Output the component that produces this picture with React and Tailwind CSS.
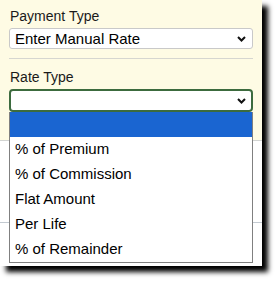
const font = { fontFamily: '"Liberation Sans", Arial, sans-serif' };

function Chevron() {
  return (
    <svg width="9" height="6" viewBox="0 0 9 6" className="shrink-0">
      <path d="M1 1 L4.5 4.5 L8 1" fill="none" stroke="#111" strokeWidth="2" />
    </svg>
  );
}

const options = ['', '% of Premium', '% of Commission', 'Flat Amount', 'Per Life', '% of Remainder'];

export default function App() {
  return (
    <div className="w-[275px] h-[285px] bg-white font-['Liberation_Sans',Arial,sans-serif]">
      <div className="relative w-[262px] h-[266px] bg-white shadow-[6px_6px_5px_#000]">
        <div className="h-[141px] bg-[#fefbe4] border-b border-[#d2d4d2] pt-[6px]">
          <div className="pl-[10px] text-[14px] leading-[20px] text-[#1a1a1a]">Payment Type</div>
          <div className="ml-[9px] mt-[2px] w-[244px] h-[21px] bg-white border border-[#c9c9c9] rounded-[3px] flex items-center justify-between pl-[5px] pr-[6px]">
            <span className="text-[15px] leading-[19px] text-black">Enter Manual Rate</span>
            <Chevron />
          </div>
          <div className="ml-[9px] mt-[9px] w-[244px] border-t border-[#d6d6d0]" />
          <div className="pl-[10px] mt-[8px] text-[14px] leading-[20px] text-[#1a1a1a]">Rate Type</div>
          <div className="ml-[9px] mt-[2px] w-[244px] h-[23px] bg-white border-2 border-[#3c6b3e] rounded-[4px] flex items-center justify-end pr-[5px]">
            <Chevron />
          </div>
        </div>
        <div className="h-[82px] border-b border-[#c3cad1]" />
        <div className="absolute left-[9px] top-[112px] w-[244px] bg-white border border-t-0 border-[#808080]">
          {options.map((o, i) => (
            <div
              key={i}
              className={`h-[25px] pl-[5px] flex items-center text-[15px] ${i === 0 ? 'bg-[#1a65d1] text-white' : 'text-black'}`}
            >
              {o}
            </div>
          ))}
        </div>
      </div>
    </div>
  );
}
